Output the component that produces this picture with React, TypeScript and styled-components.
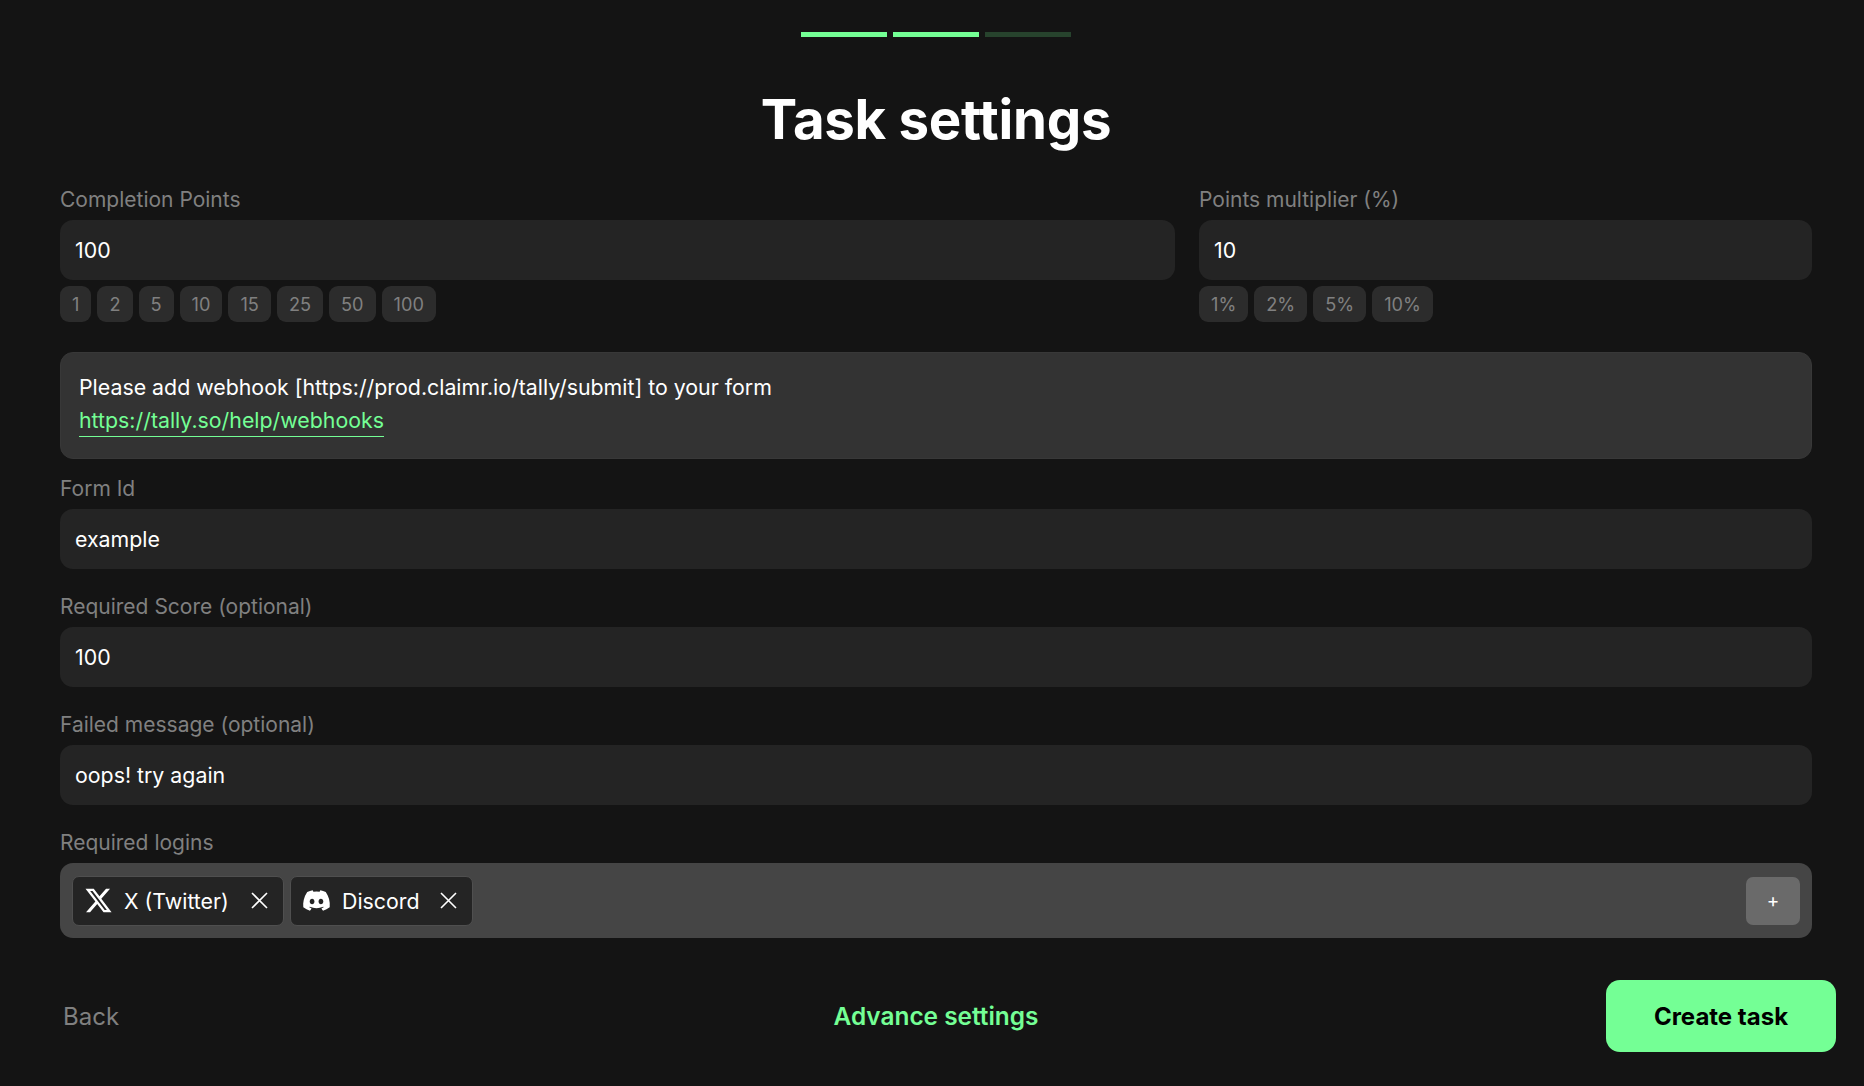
import React from 'react';
import styled, { createGlobalStyle } from 'styled-components';
import { FaDiscord, FaXTwitter } from 'react-icons/fa6';

const GlobalStyle = createGlobalStyle`
  html, body {
    margin: 0;
    padding: 0;
    background: #141414;
  }
  * {
    box-sizing: border-box;
  }
`;

const Page = styled.div`
  width: 1864px;
  height: 1086px;
  padding: 32px 52px 0 60px;
  background: #141414;
  font-family: 'Inter', sans-serif;
  color: #fff;
  overflow: hidden;
`;

const Progress = styled.div`
  display: flex;
  justify-content: center;
  gap: 6px;
`;

const Step = styled.div<{ $done?: boolean }>`
  width: 86px;
  height: 5px;
  background: ${(p) => (p.$done ? '#74ff95' : '#27432d')};
`;

const Title = styled.h1`
  margin: 48px 0 0;
  height: 68px;
  font-size: 54.6px;
  line-height: 68px;
  font-weight: 700;
  text-align: center;
  letter-spacing: -0.3px;
`;

const TopRow = styled.div`
  display: grid;
  grid-template-columns: 1115px 613px;
  gap: 24px;
  margin-top: 33px;
`;

const Field = styled.div`
  display: flex;
  flex-direction: column;
`;

const Label = styled.label`
  display: block;
  height: 34px;
  font-size: 21px;
  line-height: 28px;
  color: #808080;
`;

const Input = styled.input`
  width: 100%;
  height: 60px;
  padding: 0 15px;
  border: none;
  outline: none;
  border-radius: 13px;
  background: #242424;
  color: #fff;
  font-family: inherit;
  font-size: 21.33px;
`;

const Chips = styled.div`
  display: flex;
  gap: 6px;
  margin-top: 6px;
`;

const Chip = styled.button`
  height: 36px;
  padding: 0 12px;
  border: none;
  border-radius: 9px;
  background: #2c2c2c;
  color: #808080;
  font-family: inherit;
  font-size: 18.2px;
`;

const Notice = styled.div`
  margin-top: 30px;
  height: 107px;
  padding: 18px 18px;
  border: 1px solid #383838;
  border-radius: 13px;
  background: #333;
  font-size: 21.33px;
  line-height: 33px;
`;

const NoticeLink = styled.a`
  padding-bottom: 3px;
  color: #74ff95;
  text-decoration: none;
  border-bottom: 1px solid #74ff95;
`;

const Stack = styled.div`
  display: flex;
  flex-direction: column;
  gap: 24px;
  margin-top: 16px;
`;

const LoginBox = styled.div`
  display: flex;
  align-items: center;
  gap: 6px;
  height: 75px;
  padding: 0 12px;
  border-radius: 13px;
  background: #454545;
`;

const LoginTag = styled.div<{ $width: number }>`
  display: flex;
  align-items: center;
  width: ${(p) => p.$width}px;
  height: 50px;
  padding: 0 15px 0 11px;
  border: 1px solid #4f4f4f;
  border-radius: 7px;
  background: #242424;
  font-size: 21.33px;

  svg:first-child {
    font-size: 29px;
    margin-right: 11px;
  }
`;

const RemoveIcon = styled.svg.attrs({ viewBox: '0 0 17 17' })`
  width: 17px;
  height: 17px;
  margin-left: auto;
  fill: none;
  stroke: #fff;
  stroke-width: 1.6;
`;

const AddButton = styled.button`
  width: 54px;
  height: 48px;
  margin-left: auto;
  border: none;
  border-radius: 7px;
  background: #6a6a6a;
  color: #fff;
  font-family: inherit;
  font-size: 19px;
`;

const Footer = styled.div`
  display: flex;
  align-items: center;
  justify-content: space-between;
  margin: 42px -24px 0 0;
`;

const BackButton = styled.button`
  width: 206px;
  padding: 0 0 0 3px;
  border: none;
  background: none;
  color: #808080;
  font-family: inherit;
  font-size: 24px;
  text-align: left;
`;

const AdvanceButton = styled.button`
  padding: 0;
  border: none;
  background: none;
  color: #74ff95;
  font-family: inherit;
  font-size: 24.4px;
  font-weight: 600;
`;

const CreateButton = styled.button`
  width: 230px;
  height: 72px;
  border: none;
  border-radius: 14px;
  background: #74ff95;
  color: #000;
  font-family: inherit;
  font-size: 24px;
  font-weight: 700;
`;

const pointChoices = ['1', '2', '5', '10', '15', '25', '50', '100'];
const multiplierChoices = ['1%', '2%', '5%', '10%'];

const Remove = () => (
  <RemoveIcon>
    <path d="M1 1l15 15M16 1L1 16" />
  </RemoveIcon>
);

const App = () => {
  return (
    <Page>
      <GlobalStyle />
      <Progress>
        <Step $done />
        <Step $done />
        <Step />
      </Progress>
      <Title>Task settings</Title>
      <TopRow>
        <Field>
          <Label>Completion Points</Label>
          <Input defaultValue="100" />
          <Chips>
            {pointChoices.map((c) => (
              <Chip key={c}>{c}</Chip>
            ))}
          </Chips>
        </Field>
        <Field>
          <Label>Points multiplier (%)</Label>
          <Input defaultValue="10" />
          <Chips>
            {multiplierChoices.map((c) => (
              <Chip key={c}>{c}</Chip>
            ))}
          </Chips>
        </Field>
      </TopRow>
      <Notice>
        Please add webhook [https://prod.claimr.io/tally/submit] to your form
        <br />
        <NoticeLink href="#">https://tally.so/help/webhooks</NoticeLink>
      </Notice>
      <Stack>
        <Field>
          <Label>Form Id</Label>
          <Input defaultValue="example" />
        </Field>
        <Field>
          <Label>Required Score (optional)</Label>
          <Input defaultValue="100" />
        </Field>
        <Field>
          <Label>Failed message (optional)</Label>
          <Input defaultValue="oops! try again" />
        </Field>
        <Field>
          <Label>Required logins</Label>
          <LoginBox>
            <LoginTag $width={212}>
              <FaXTwitter />
              X (Twitter)
              <Remove />
            </LoginTag>
            <LoginTag $width={183}>
              <FaDiscord />
              Discord
              <Remove />
            </LoginTag>
            <AddButton>+</AddButton>
          </LoginBox>
        </Field>
      </Stack>
      <Footer>
        <BackButton>Back</BackButton>
        <AdvanceButton>Advance settings</AdvanceButton>
        <CreateButton>Create task</CreateButton>
      </Footer>
    </Page>
  );
};

export default App;
